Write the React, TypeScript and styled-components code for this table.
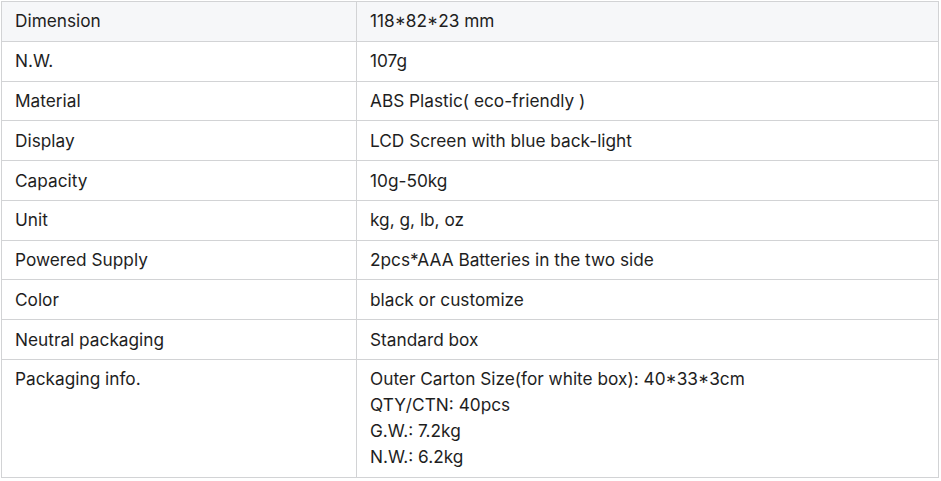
import React from "react";
import styled, { createGlobalStyle } from "styled-components";

const GlobalStyle = createGlobalStyle`
  html, body { margin: 0; padding: 0; background: #ffffff; }
  body { font-family: Inter, "Noto Sans", "Liberation Sans", sans-serif; }
`;

const Wrapper = styled.div`
  padding: 1px 0 0 1px;
`;

const Table = styled.table`
  width: 938px;
  border-collapse: collapse;
  table-layout: fixed;
  font-family: Inter, "Noto Sans", "Liberation Sans", sans-serif;
  font-size: 17.25px;
  line-height: 26px;
  color: #1e1e1e;
`;

const Row = styled.tr<{ $shaded?: boolean }>`
  background: ${(p) => (p.$shaded ? "#f6f7f9" : "#ffffff")};
`;

const Cell = styled.td<{ $label?: boolean }>`
  border: 1px solid #d2d3d5;
  padding: 6.4px 13px;
  vertical-align: top;
  width: ${(p) => (p.$label ? "328px" : "auto")};
  text-align: left;
`;

const Line = styled.div``;

const rows: [string, string[]][] = [
  ["Dimension", ["118*82*23 mm"]],
  ["N.W.", ["107g"]],
  ["Material", ["ABS Plastic( eco-friendly )"]],
  ["Display", ["LCD Screen with blue back-light"]],
  ["Capacity", ["10g-50kg"]],
  ["Unit", ["kg, g, lb, oz"]],
  ["Powered Supply", ["2pcs*AAA Batteries in the two side"]],
  ["Color", ["black or customize"]],
  ["Neutral packaging", ["Standard box"]],
  [
    "Packaging info.",
    [
      "Outer Carton Size(for white box): 40*33*3cm",
      "QTY/CTN: 40pcs",
      "G.W.: 7.2kg",
      "N.W.: 6.2kg",
    ],
  ],
];

export default function App() {
  return (
    <>
      <GlobalStyle />
      <Wrapper>
        <Table>
          <tbody>
            {rows.map(([label, values], i) => (
              <Row key={label} $shaded={i === 0}>
                <Cell $label>{label}</Cell>
                <Cell>
                  {values.map((v) => (
                    <Line key={v}>{v}</Line>
                  ))}
                </Cell>
              </Row>
            ))}
          </tbody>
        </Table>
      </Wrapper>
    </>
  );
}
